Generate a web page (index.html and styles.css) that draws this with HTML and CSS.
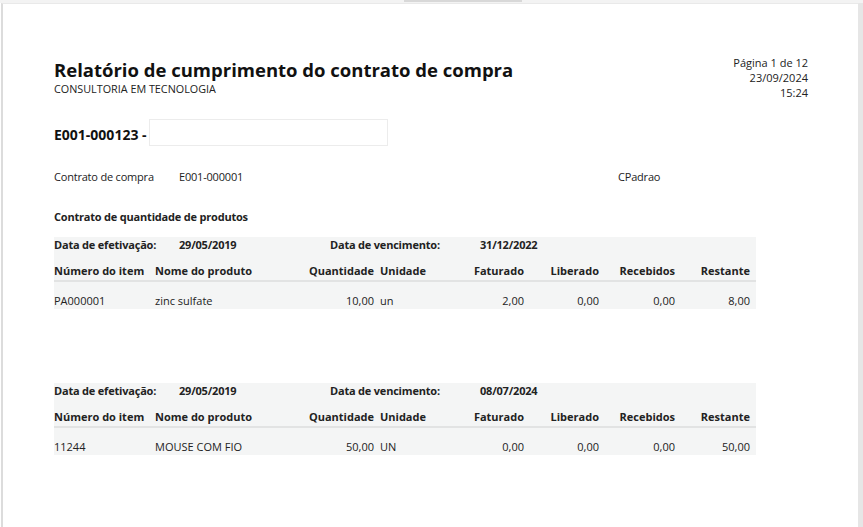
FILE: index.html
```html
<!DOCTYPE html>
<html lang="pt">
<head>
<meta charset="utf-8">
<title>Relatório de cumprimento do contrato de compra</title>
<link rel="stylesheet" href="styles.css">
</head>
<body>
<div class="viewport">
  <div class="topbar"><div class="thumb"></div></div>
  <div class="frame">
    <div class="page">
      <header class="report-head">
        <div class="title-block">
          <h1 class="title">Relatório de cumprimento do contrato de compra</h1>
          <div class="company">CONSULTORIA EM TECNOLOGIA</div>
        </div>
        <div class="meta">
          <div>Página 1 de 12</div>
          <div>23/09/2024</div>
          <div>15:24</div>
        </div>
      </header>

      <div class="doc-id">
        <span class="doc-code">E001-000123 -</span>
        <div class="doc-input"></div>
      </div>

      <div class="contract-row">
        <span class="c-label">Contrato de compra</span>
        <span class="c-value">E001-000001</span>
        <span class="c-extra">CPadrao</span>
      </div>

      <div class="section-title">Contrato de quantidade de produtos</div>

      <section class="block">
        <div class="dates">
          <span class="b">Data de efetivação:</span>
          <span class="b">29/05/2019</span>
          <span class="b">Data de vencimento:</span>
          <span class="b">31/12/2022</span>
        </div>
        <div class="grid head">
          <span>Número do item</span>
          <span>Nome do produto</span>
          <span class="r">Quantidade</span>
          <span class="u">Unidade</span>
          <span class="r">Faturado</span>
          <span class="r">Liberado</span>
          <span class="r">Recebidos</span>
          <span class="r">Restante</span>
        </div>
        <div class="grid data">
          <span>PA000001</span>
          <span>zinc sulfate</span>
          <span class="r">10,00</span>
          <span class="u">un</span>
          <span class="r">2,00</span>
          <span class="r">0,00</span>
          <span class="r">0,00</span>
          <span class="r">8,00</span>
        </div>
      </section>

      <section class="block second">
        <div class="dates">
          <span class="b">Data de efetivação:</span>
          <span class="b">29/05/2019</span>
          <span class="b">Data de vencimento:</span>
          <span class="b">08/07/2024</span>
        </div>
        <div class="grid head">
          <span>Número do item</span>
          <span>Nome do produto</span>
          <span class="r">Quantidade</span>
          <span class="u">Unidade</span>
          <span class="r">Faturado</span>
          <span class="r">Liberado</span>
          <span class="r">Recebidos</span>
          <span class="r">Restante</span>
        </div>
        <div class="grid data">
          <span>11244</span>
          <span>MOUSE COM FIO</span>
          <span class="r">50,00</span>
          <span class="u">UN</span>
          <span class="r">0,00</span>
          <span class="r">0,00</span>
          <span class="r">0,00</span>
          <span class="r">50,00</span>
        </div>
      </section>
    </div>
    <div class="scroll-side"></div>
  </div>
</div>
</body>
</html>
```

FILE: styles.css
```css
* { box-sizing: border-box; }

html, body {
  margin: 0;
  padding: 0;
  background: #ffffff;
}

body {
  font-family: "Open Sans", "Noto Sans", "Liberation Sans", sans-serif;
  font-size: 11px;
  line-height: 15px;
  color: #222222;
}

.viewport {
  width: 863px;
  height: 527px;
  overflow: hidden;
  display: flex;
  flex-direction: column;
}

.topbar {
  height: 3px;
  background: #f3f3f3;
  padding-left: 404px;
  flex: none;
}

.thumb {
  width: 118px;
  height: 2px;
  background: #d8d8d8;
}

.frame {
  flex: 1;
  display: flex;
  padding-left: 1px;
}

.page {
  flex: 1;
  border-left: 2px solid #dcdcdc;
  border-top: 1px solid #e9e9e9;
  border-right: 1px solid #e6e6e6;
  padding: 51px 50px 0 51px;
  background: #ffffff;
}

.scroll-side {
  width: 4px;
  background: #e6e6e6;
  flex: none;
}

/* header */
.report-head {
  display: flex;
  justify-content: space-between;
  align-items: flex-start;
}

.title-block {
  margin-top: 3px;
}

.title {
  margin: 0;
  font-size: 18.5px;
  line-height: 24px;
  font-weight: 700;
  color: #111111;
}

.company {
  font-size: 10.8px;
  line-height: 13px;
  color: #222222;
}

.meta {
  text-align: right;
  font-size: 11px;
  line-height: 15px;
  color: #222222;
}

/* document id */
.doc-id {
  display: flex;
  align-items: flex-start;
  margin-top: 19px;
  height: 27px;
}

.doc-code {
  font-size: 14px;
  line-height: 18px;
  font-weight: 700;
  margin-top: 7px;
  margin-right: 2px;
  color: #111111;
}

.doc-input {
  width: 239px;
  height: 27px;
  border: 1px solid #ececec;
  background: #ffffff;
}

/* contract row */
.contract-row {
  display: grid;
  grid-template-columns: 125px 439px auto;
  margin-top: 23px;
  letter-spacing: -0.2px;
}

.section-title {
  margin-top: 25px;
  font-weight: 700;
  letter-spacing: -0.2px;
}

/* tables */
.block {
  width: 702px;
  background: #f4f5f5;
  margin-top: 13px;
  height: 72px;
}

.block.second {
  margin-top: 74px;
}

.dates {
  display: grid;
  grid-template-columns: 125px 151px 150px auto;
  height: 15px;
  letter-spacing: -0.2px;
}

.b { font-weight: 700; }

.grid {
  display: grid;
  grid-template-columns: 101px 148px 71px 80px 70px 75px 76px 75px;
  padding-right: 6px;
}

.grid .r { text-align: right; }
.grid .u { padding-left: 6px; }

.head {
  margin-top: 11px;
  font-weight: 700;
  padding-bottom: 2px;
  border-bottom: 2px solid #e2e3e3;
}

.data {
  padding-top: 11px;
}
```
